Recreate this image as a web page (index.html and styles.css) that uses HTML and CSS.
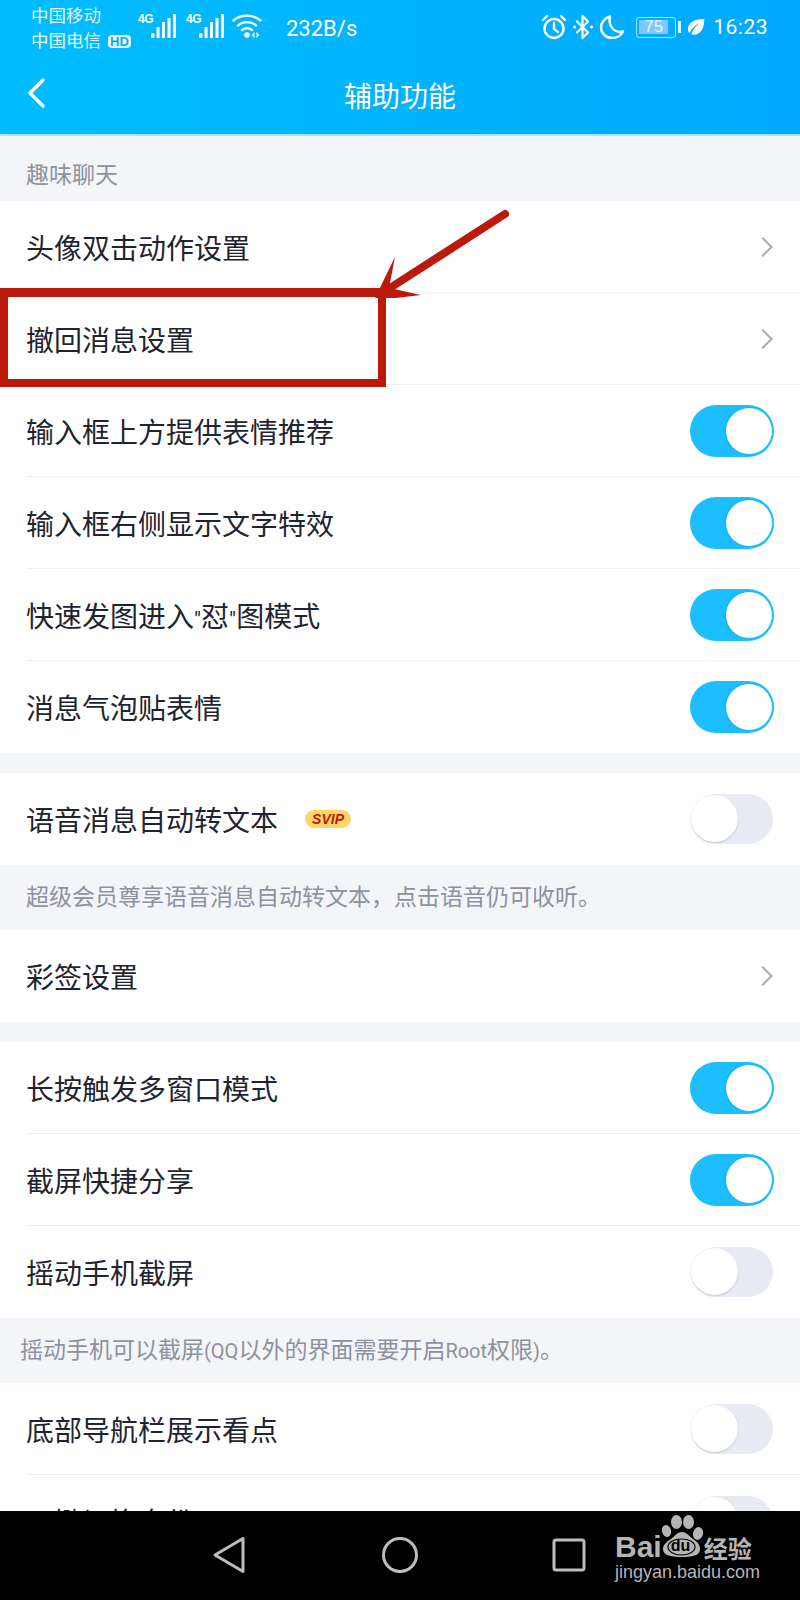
FILE: index.html

```html
<!DOCTYPE html>
<html lang="zh-CN">
<head>
    <meta charset="UTF-8">
    <meta name="viewport" content="width=device-width, initial-scale=1.0">
    <title>辅助功能</title>
    <link rel="stylesheet" href="styles.css">
</head>
<body>
<div class="phone">
    <header class="top">
        <div class="status">
            <div class="carriers">
                <div>中国移动</div>
                <div>中国电信<span class="hd">HD</span></div>
            </div>
            <div class="signal">
                <span class="net">4G</span>
                <svg class="bars" width="25" height="24" viewBox="0 0 25 24"><g fill="#fff"><rect x="0" y="19" width="3.500" height="5" rx="1.500"/><rect x="5.500" y="13" width="3" height="11"/><rect x="11" y="8" width="3" height="16"/><rect x="16.500" y="4" width="3" height="20"/><rect x="22" y="0" width="3" height="24"/></g></svg>
                <span class="net net2">4G</span>
                <svg class="bars" width="25" height="24" viewBox="0 0 25 24"><g fill="#fff"><rect x="0" y="19" width="3.500" height="5" rx="1.500"/><rect x="5.500" y="13" width="3" height="11"/><rect x="11" y="8" width="3" height="16"/><rect x="16.500" y="4" width="3" height="20"/><rect x="22" y="0" width="3" height="24"/></g></svg>
                <svg class="wifi" width="30" height="24" viewBox="0 0 30 24"><g fill="none" stroke="#fff" stroke-width="2.400" stroke-linecap="round"><path d="M1.500 6.500C8.500 0 21.500 0 28.500 6.500"/><path d="M6 11.500C11 7 19 7 24 11.500"/><path d="M10 16C13 13.500 17 13.500 20 16"/></g><circle cx="15" cy="21" r="2.800" fill="#fff"/><path d="M22.500 18v6l-3-3zM24.500 18v6l3-3z" fill="#fff"/></svg>
            </div>
            <div class="speed">232B/s</div>
            <div class="status-right">
                <svg width="26" height="26" viewBox="0 0 26 26"><g fill="none" stroke="#fff" stroke-width="2.400" stroke-linecap="round"><circle cx="13" cy="14.500" r="9.500"/><path d="M13 9v6l4 3"/><path d="M2 6l4-4M24 6l-4-4"/></g></svg>
                <svg class="bt" width="20" height="26" viewBox="0 0 20 26"><path d="M4 7.500l11 11-5.500 5.500V2l5.500 5.500-11 11" fill="none" stroke="#fff" stroke-width="2.200" stroke-linejoin="round" stroke-linecap="round"/><circle cx="1.500" cy="13" r="1.500" fill="#fff"/><circle cx="18.500" cy="13" r="1.500" fill="#fff"/></svg>
                <svg class="moon" width="26" height="26" viewBox="0 0 26 26"><path d="M11 2.500C5.500 4 2 8.500 2 13.500 2 19.500 7 24 13 24c5 0 9-2.500 11-6.500-7 2-15-3-13-15z" fill="none" stroke="#fff" stroke-width="2.400" stroke-linejoin="round"/></svg>
                <div class="battery"><div class="battery-box"><span class="battery-fill">75</span></div><span class="battery-cap"></span></div>
                <svg class="leaf" width="18" height="18" viewBox="0 0 18 18"><path d="M17 1C8 1 2 4 1 10c-.3 2 .3 4 1.300 5 3-5 6-8 10-10-3 3-6 6-8 11 1.500 1 4 1 6 0 5-2 7-8 7-15z" fill="#fff"/></svg>
                <div class="clock">16:23</div>
            </div>
        </div>
        <div class="nav">
            <svg class="back" width="20" height="32" viewBox="0 0 20 32"><path d="M17 3L4 16l13 13" fill="none" stroke="#fff" stroke-width="3.400" stroke-linecap="round" stroke-linejoin="round"/></svg>
            <h1>辅助功能</h1>
        </div>
    </header>

    <main class="content">
        <div class="label">趣味聊天</div>
        <section class="group">
            <div class="row"><span class="name">头像双击动作设置</span><span class="chev"></span></div>
            <div class="row"><span class="name">撤回消息设置</span><span class="chev"></span></div>
            <div class="row"><span class="name">输入框上方提供表情推荐</span><span class="switch on"></span></div>
            <div class="row"><span class="name">输入框右侧显示文字特效</span><span class="switch on"></span></div>
            <div class="row"><span class="name">快速发图进入<span class="quote">"</span>怼<span class="quote">"</span>图模式</span><span class="switch on"></span></div>
            <div class="row"><span class="name">消息气泡贴表情</span><span class="switch on"></span></div>
        </section>
        <div class="gap"></div>
        <section class="group">
            <div class="row"><span class="name">语音消息自动转文本</span><span class="svip">SVIP</span><span class="switch"></span></div>
        </section>
        <div class="note">超级会员尊享语音消息自动转文本，点击语音仍可收听。</div>
        <section class="group">
            <div class="row"><span class="name">彩签设置</span><span class="chev"></span></div>
        </section>
        <div class="gap"></div>
        <section class="group">
            <div class="row"><span class="name">长按触发多窗口模式</span><span class="switch on"></span></div>
            <div class="row"><span class="name">截屏快捷分享</span><span class="switch on"></span></div>
            <div class="row"><span class="name">摇动手机截屏</span><span class="switch"></span></div>
        </section>
        <div class="note note-left">摇动手机可以截屏<span class="latin">(QQ</span>以外的界面需要开启<span class="latin">Root</span>权限<span class="latin">)</span>。</div>
        <section class="group">
            <div class="row"><span class="name">底部导航栏展示看点</span><span class="switch"></span></div>
            <!-- this row is cut off by the nav bar in the screenshot, the label can't be read and is a stand-in -->
            <div class="row"><span class="name">一键切换身份</span><span class="switch"></span></div>
        </section>
    </main>

    <footer class="softkeys">
        <svg width="34" height="38" viewBox="0 0 34 38"><path d="M31 2.500L3 19l28 16.500z" fill="none" stroke="#bdbdbd" stroke-width="3" stroke-linejoin="round"/></svg>
        <svg width="38" height="38" viewBox="0 0 38 38"><circle cx="19" cy="19" r="16.500" fill="none" stroke="#bdbdbd" stroke-width="3"/></svg>
        <svg width="34" height="34" viewBox="0 0 34 34"><rect x="2" y="2" width="30" height="30" rx="2" fill="none" stroke="#bdbdbd" stroke-width="3"/></svg>
    </footer>

    <div class="watermark">
        <div class="wm-top">
            <span class="wm-bai">Bai</span>
            <span class="wm-paw">
                <svg width="42" height="45" viewBox="0 0 42 45"><g fill="#b5b5b5"><ellipse cx="4.500" cy="16" rx="4.500" ry="6" transform="rotate(-15 4.500 16)"/><ellipse cx="14.500" cy="7" rx="5.500" ry="7"/><ellipse cx="26.500" cy="7" rx="5.500" ry="7"/><ellipse cx="36" cy="18.500" rx="5" ry="6.500" transform="rotate(15 36 18.500)"/><path d="M20 17c5 0 7 4 11 7 5 3 7 6 7 10 0 6-6 8-18 8S1 40 1 34c0-4 3-7 8-10 4-3 6-7 11-7z"/></g><ellipse cx="19.500" cy="32" rx="13.500" ry="8" fill="none" stroke="#000" stroke-width="1.200"/></svg>
                <span class="wm-du">du</span>
            </span>
            <span class="wm-cn">经验</span>
        </div>
        <div class="wm-url">jingyan.baidu.com</div>
    </div>

    <div class="mark"></div>
    <svg class="arrow" width="150" height="100" viewBox="0 0 150 100"><path d="M139 10L24 84" fill="none" stroke="#bb1a0b" stroke-width="8" stroke-linecap="round"/><path d="M9 94L29 53 24 79 28 85 55 91 30 94z" fill="#bb1a0b"/></svg>
</div>
</body>
</html>
```

FILE: styles.css

```css
* { box-sizing: border-box; }
html, body { margin: 0; padding: 0; }
body { font-family: "Noto Sans CJK SC", "Liberation Sans", sans-serif; background-color: #f4f5f9; color: #1f2430; }

.phone { position: relative; width: 800px; height: 1600px; display: flex; flex-direction: column; overflow: hidden; }

.top { height: 136px; flex: none; background: linear-gradient(90deg, #00bdfd 0%, #00a9ff 100%); color: #fff; border-bottom: 2px solid #a4e6ff; }
.status { height: 55px; display: flex; align-items: flex-start; padding-left: 31px; }
.carriers { width: 102px; font-size: 17.500px; line-height: 25px; padding-top: 2px; white-space: nowrap; color: #e6f8ff; }
.hd { display: inline-block; margin-left: 7px; padding: 0 2px; height: 13px; border-radius: 4px; background-color: #e6f8ff; color: #00b0fd; font: bold 13px/13px "Liberation Sans", sans-serif; vertical-align: 1px; }
.signal { display: flex; align-items: flex-start; padding-top: 14px; margin-left: 5px; }
.net { width: 12px; font: bold 12px/11px "Liberation Sans", sans-serif; letter-spacing: -.5px; white-space: nowrap; }
.bars { margin-left: 1px; }
.net2 { margin-left: 10px; }
.wifi { margin-left: 8px; }
.speed { font: 22px/30px Roboto, sans-serif; margin-left: 24px; padding-top: 14px; }
.status-right { margin-left: auto; display: flex; align-items: center; height: 26px; margin-top: 14px; padding-right: 32px; }
.bt { margin-left: 6px; }
.moon { margin-left: 6px; }
.battery { display: flex; align-items: center; margin-left: 11px; }
.battery-box { width: 40px; height: 21px; border: 1.500px solid #a8e4ff; border-radius: 3px; padding: 2px; }
.battery-fill { display: block; width: 29px; height: 14px; background-color: #7cc8ff; font: 17px/14px "Liberation Sans", sans-serif; text-align: center; color: #e8f6ff; }
.battery-cap { width: 3px; height: 12px; margin-left: 2px; background-color: #d6f3ff; }
.leaf { margin-left: 6px; }
.clock { font: 21px/26px Roboto, sans-serif; margin-left: 8px; letter-spacing: .5px; }

.nav { position: relative; height: 79px; display: flex; align-items: center; justify-content: center; }
.nav h1 { margin: 0; font-size: 28px; font-weight: 400; line-height: 76px; }
.back { position: absolute; left: 26px; top: 22px; }

.content { flex: 1; overflow: hidden; }
.label { height: 65px; padding: 23px 0 0 26px; font-size: 23px; line-height: 28px; color: #8d929e; }
.group { background-color: #fff; }
.row { position: relative; height: 92px; display: flex; align-items: center; padding: 0 26px; }
.row + .row::before { content: ""; position: absolute; left: 26px; right: 0; top: -1px; height: 1px; background-color: #eeeff3; }
.name { font-size: 28px; line-height: 40px; white-space: nowrap; }
.quote { font: 22px/0 Roboto, sans-serif; }
.chev { margin-left: auto; margin-right: 4px; width: 14px; height: 14px; border-top: 2px solid #a8adb5; border-right: 2px solid #a8adb5; transform: rotate(45deg); }
.gap { height: 20px; }
.note { height: 65px; padding: 15px 0 0 26px; font-size: 23px; line-height: 30px; color: #8d929e; white-space: nowrap; }
.note-left { padding-left: 20px; }
.latin { font: 20px/0 Roboto, sans-serif; }

.switch { margin-left: auto; margin-right: 1px; width: 82px; height: 50px; border-radius: 25px; background-color: #e8ebf5; position: relative; }
.switch::after { content: ""; position: absolute; left: 0; top: 1px; width: 47px; height: 47px; border-radius: 50%; background-color: #fff; box-shadow: 0 1px 2px rgba(80, 90, 110, .25); }
.switch.on { margin-right: 0; width: 84px; height: 52px; border-radius: 26px; background-color: #1cbefd; }
.switch.on::after { left: 36px; top: 3px; width: 46px; height: 46px; box-shadow: -1px 0 2px rgba(0, 90, 130, .2); }

.svip { margin-left: 27px; height: 18px; width: 46px; border-radius: 9px; background-color: #fdd667; color: #c11a0a; font: italic bold 14px/18px "Liberation Sans", sans-serif; text-align: center; }
.svip + .switch { margin-left: auto; }

.softkeys { height: 89px; flex: none; background-color: #000; display: flex; align-items: flex-start; padding: 25px 0 0 212px; }
.softkeys svg:nth-child(2) { margin-left: 135px; }
.softkeys svg:nth-child(3) { margin-left: 133px; margin-top: 2px; }

.watermark { position: absolute; left: 615px; top: 1515px; width: 145px; color: #b5b5b5; }
.wm-top { display: flex; align-items: flex-end; height: 45px; }
.wm-bai { font: bold 30px/30px "Liberation Sans", sans-serif; margin-bottom: -2px; }
.wm-paw { position: relative; width: 42px; height: 45px; flex: none; }
.wm-du { position: absolute; left: 9px; top: 22px; font: bold 16px/18px "Liberation Sans", sans-serif; color: #000; }
.wm-cn { font-size: 24px; line-height: 28px; font-weight: 700; margin-bottom: -2px; white-space: nowrap; }
.wm-url { font: 18px/22px "Liberation Sans", sans-serif; margin-top: 1px; white-space: nowrap; }

.mark { position: absolute; left: 0; top: 288px; width: 386px; height: 99px; border: solid #bb1a0b; border-width: 9px 8px 8px; }
.arrow { position: absolute; left: 366px; top: 204px; }
```
